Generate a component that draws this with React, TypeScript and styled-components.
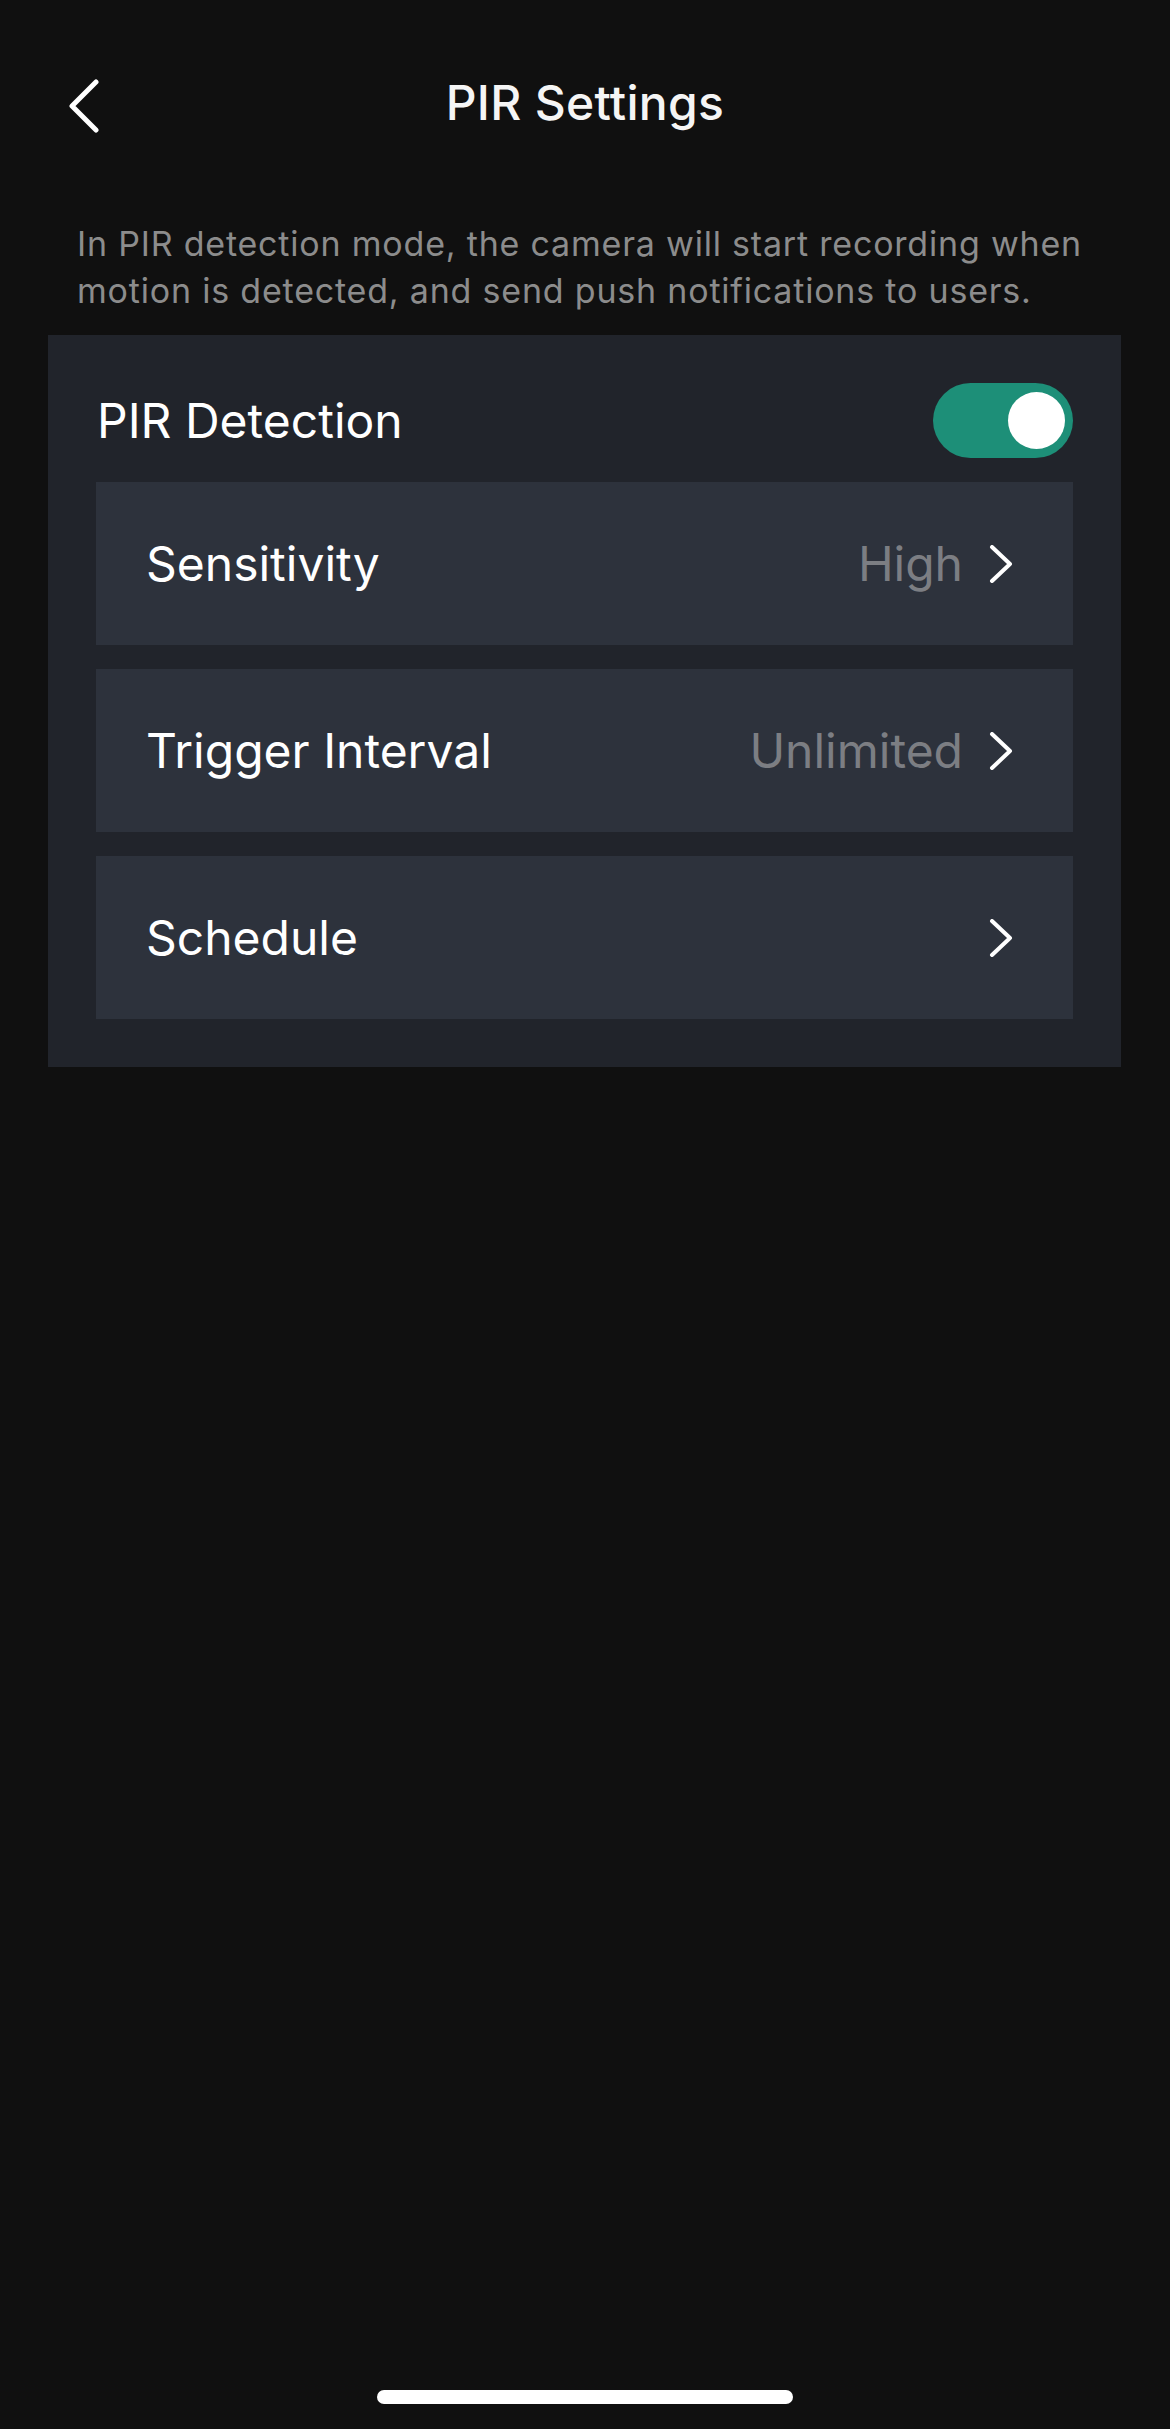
import React, { useState } from 'react';
import styled, { createGlobalStyle } from 'styled-components';

const GlobalStyle = createGlobalStyle`
  html, body {
    margin: 0;
    padding: 0;
    background: #101010;
  }
  body {
    font-family: Inter, "Noto Sans", "Liberation Sans", sans-serif;
    -webkit-font-smoothing: antialiased;
  }
`;

const Screen = styled.div`
  width: 1170px;
  height: 2429px;
  background: #101010;
  display: flex;
  flex-direction: column;
  position: relative;
  overflow: hidden;
`;

const NavBar = styled.div`
  height: 210px;
  display: grid;
  grid-template-columns: 160px 1fr 160px;
  align-items: start;
`;

const BackButton = styled.button`
  background: none;
  border: none;
  padding: 0;
  margin: 78px 0 0 64px;
  width: 40px;
  height: 56px;
  cursor: pointer;
  display: flex;
  align-items: center;
  justify-content: center;
`;

const Title = styled.h1`
  margin: 75px 0 0;
  text-align: center;
  font-size: 48px;
  font-weight: 500;
  color: #f5f5f5;
  letter-spacing: 0.3px;
  line-height: 56px;
`;

const Description = styled.p`
  margin: 0;
  padding: 10px 56px 0 77px;
  font-size: 34px;
  line-height: 47px;
  color: #8c8c8c;
  letter-spacing: 0.8px;
`;

const Panel = styled.section`
  margin: 21px 49px 0 48px;
  background: #21242b;
  padding: 48px;
  display: flex;
  flex-direction: column;
  gap: 24px;
`;

const HeaderRow = styled.div`
  display: flex;
  align-items: center;
  justify-content: space-between;
  height: 75px;
  padding-left: 1px;
`;

const HeaderLabel = styled.span`
  font-size: 48px;
  color: #ffffff;
  font-weight: 400;
`;

const Toggle = styled.button<{ $on: boolean }>`
  width: 140px;
  height: 75px;
  border-radius: 38px;
  border: none;
  padding: 0 8px;
  background: ${({ $on }) => ($on ? '#1d8f78' : '#4a4f59')};
  display: flex;
  align-items: center;
  justify-content: ${({ $on }) => ($on ? 'flex-end' : 'flex-start')};
  cursor: pointer;
`;

const Knob = styled.span`
  width: 57px;
  height: 57px;
  border-radius: 50%;
  background: #ffffff;
`;

const Row = styled.div`
  height: 163px;
  background: #2d323c;
  display: flex;
  align-items: center;
  justify-content: space-between;
  padding: 0 60px 0 50px;
  cursor: pointer;
`;

const RowLabel = styled.span`
  font-size: 48px;
  color: #ffffff;
`;

const RowRight = styled.div`
  display: flex;
  align-items: center;
  gap: 26px;
`;

const RowValue = styled.span`
  font-size: 48px;
  color: #7c7e83;
`;

const HomeIndicator = styled.div`
  position: absolute;
  left: 377px;
  bottom: 25px;
  width: 416px;
  height: 14px;
  border-radius: 7px;
  background: #ffffff;
`;

const ChevronLeft = () => (
  <svg width="32" height="54" viewBox="0 0 32 54" fill="none">
    <path d="M28 3 L4 27 L28 51" stroke="#ffffff" strokeWidth="5" strokeLinecap="round" strokeLinejoin="round" />
  </svg>
);

const ChevronRight = () => (
  <svg width="24" height="38" viewBox="0 0 24 38" fill="none">
    <path d="M3 2 L21 19 L3 36" stroke="#ffffff" strokeWidth="4" strokeLinecap="round" strokeLinejoin="round" />
  </svg>
);

const rows = [
  { label: 'Sensitivity', value: 'High' },
  { label: 'Trigger Interval', value: 'Unlimited' },
  { label: 'Schedule', value: '' },
];

export default function App() {
  const [pirOn, setPirOn] = useState(true);

  return (
    <>
      <GlobalStyle />
      <Screen>
        <NavBar>
          <BackButton aria-label="Back">
            <ChevronLeft />
          </BackButton>
          <Title>PIR Settings</Title>
          <div />
        </NavBar>
        <Description>
          In PIR detection mode, the camera will start recording when motion is detected, and send push notifications to users.
        </Description>
        <Panel>
          <HeaderRow>
            <HeaderLabel>PIR Detection</HeaderLabel>
            <Toggle $on={pirOn} onClick={() => setPirOn(!pirOn)} aria-label="PIR Detection">
              <Knob />
            </Toggle>
          </HeaderRow>
          {pirOn &&
            rows.map((r) => (
              <Row key={r.label}>
                <RowLabel>{r.label}</RowLabel>
                <RowRight>
                  {r.value && <RowValue>{r.value}</RowValue>}
                  <ChevronRight />
                </RowRight>
              </Row>
            ))}
        </Panel>
        <HomeIndicator />
      </Screen>
    </>
  );
}
